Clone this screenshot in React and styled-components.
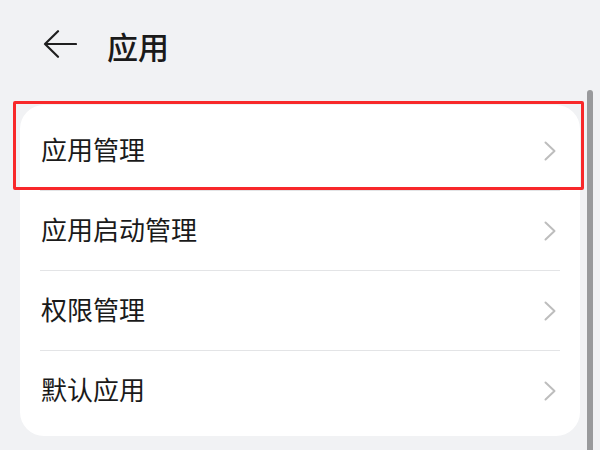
import React from "react";
import styled, { createGlobalStyle } from "styled-components";

const Global = createGlobalStyle`
  html, body { margin: 0; padding: 0; background: #f1f2f4; }
  body { font-family: "Noto Sans CJK SC", "Noto Sans", sans-serif; }
  #root { width: 600px; height: 450px; overflow: hidden; }
`;

const Page = styled.div`
  position: relative;
  width: 600px;
  height: 450px;
  background: #f1f2f4;
  overflow: hidden;
`;

const Header = styled.header`
  display: flex;
  align-items: center;
  gap: 30px;
  height: 87px;
  padding-left: 43px;
`;

const BackButton = styled.button`
  display: flex;
  align-items: center;
  padding: 0;
  border: 0;
  background: none;
  color: #1f1f1f;
`;

const Title = styled.h1`
  margin: 0;
  font-size: 31px;
  font-weight: 500;
  color: #1a1a1a;
  line-height: 1;
  padding-top: 3px;
`;

const Card = styled.div`
  position: relative;
  margin: 18px 20px 0;
  padding: 5px 0 6px;
  background: #ffffff;
  border-radius: 24px;
`;

const Row = styled.div`
  display: flex;
  align-items: center;
  justify-content: space-between;
  box-sizing: border-box;
  height: 80px;
  margin: 0 20px;
  padding: 0 4px 0 1px;
  border-top: 1px solid ${(p) => (p.$first ? "transparent" : "#e3e4e6")};
`;

const Label = styled.span`
  font-size: 26px;
  color: #1a1a1a;
  line-height: 1;
  padding-bottom: 3px;
`;

const Highlight = styled.div`
  position: absolute;
  top: -4px;
  left: -7px;
  width: 571px;
  height: 89px;
  box-sizing: border-box;
  border: 3px solid #f8282a;
  border-radius: 2px;
  pointer-events: none;
`;

const Scrollbar = styled.div`
  position: absolute;
  top: 90px;
  bottom: 0;
  left: 587px;
  width: 6px;
  border-radius: 3px 3px 0 0;
  background: #999a9c;
`;

const Chevron = () => (
  <svg width="12" height="20" viewBox="0 0 12 20" fill="none">
    <path d="M1.5 1.5 L10.5 10 L1.5 18.5" stroke="#bdbdbd" strokeWidth="2" strokeLinecap="round" strokeLinejoin="round" />
  </svg>
);

const BackArrow = () => (
  <svg width="34" height="28" viewBox="0 0 34 28" fill="none">
    <path d="M33 14 H2 M15 1.2 L2 14 L15 26.8" stroke="currentColor" strokeWidth="2.2" strokeLinecap="round" strokeLinejoin="round" />
  </svg>
);

const items = ["应用管理", "应用启动管理", "权限管理", "默认应用"];

export default function App() {
  return (
    <Page>
      <Global />
      <Header>
        <BackButton aria-label="返回">
          <BackArrow />
        </BackButton>
        <Title>应用</Title>
      </Header>
      <Card>
        {items.map((t, i) => (
          <Row key={t} $first={i === 0}>
            <Label>{t}</Label>
            <Chevron />
          </Row>
        ))}
        <Highlight />
      </Card>
      <Scrollbar />
    </Page>
  );
}
